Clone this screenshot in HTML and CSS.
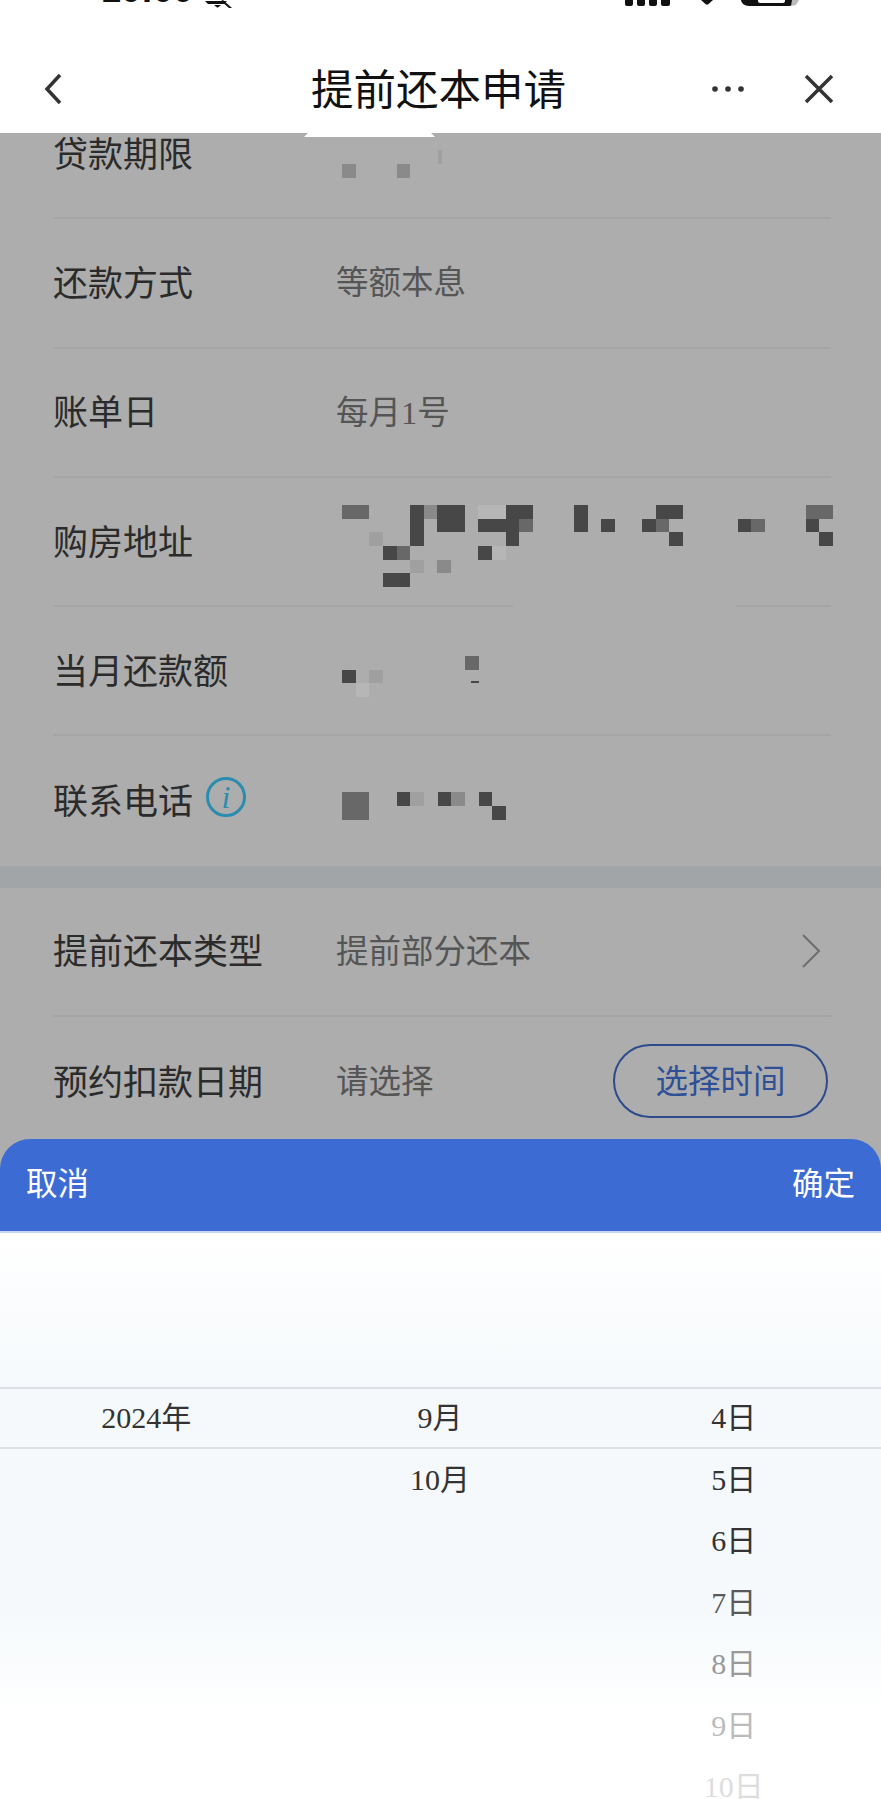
FILE: index.html
```html
<!DOCTYPE html>
<html lang="zh-CN">
<head>
    <meta charset="UTF-8">
    <title>提前还本申请</title>
    <link rel="stylesheet" href="styles.css">
</head>
<body>
<div class="page">

    <div class="status">
        <span class="time">10:00</span>
        <svg class="bell" width="27" height="8" viewBox="0 0 27 8">
            <path d="M0 1h22l-3 3H3zM9 5h7l-3 2.500h-1zM18 0l9 8h-3l-8-7z"/>
        </svg>
        <svg class="bars" width="46" height="8" viewBox="0 0 46 8">
            <path d="M0 0h8v4a2 2 0 0 1-2 2h-4a2 2 0 0 1-2-2zM12 0h8v4a2 2 0 0 1-2 2h-4a2 2 0 0 1-2-2zM24 0h8v4a2 2 0 0 1-2 2h-4a2 2 0 0 1-2-2zM36 0h9v4a2 2 0 0 1-2 2h-5a2 2 0 0 1-2-2z"/>
        </svg>
        <svg class="wifi" width="12" height="8" viewBox="0 0 12 8">
            <path d="M0 0h12l-5 4.500h-2z"/>
        </svg>
        <svg class="battery" width="58" height="8" viewBox="0 0 58 8">
            <path d="M0 0h54l-2 3a4 4 0 0 1-4 3H8a8 6 0 0 1-8-6z"/>
            <path d="M17 0h27v1a2 2 0 0 1-2 2H19a2 2 0 0 1-2-2z" fill="#fff"/>
            <path d="M51 0h7l-3 5-5 1z" fill="#bbb"/>
        </svg>
    </div>

    <header class="nav">
        <svg class="nav-back" width="20" height="32" viewBox="0 0 20 32">
            <path d="M17 2L4 16l13 14"/>
        </svg>
        <h1 class="nav-title">提前还本申请</h1>
        <div class="nav-right">
            <svg class="nav-more" width="32" height="6" viewBox="0 0 32 6">
                <circle cx="3" cy="3" r="2.800"/><circle cx="16" cy="3" r="2.800"/><circle cx="29" cy="3" r="2.800"/>
            </svg>
            <svg class="nav-close" width="30" height="30" viewBox="0 0 30 30">
                <path d="M2 2l26 26M28 2L2 28"/>
            </svg>
        </div>
    </header>

    <main class="scroll">
        <section class="list">
            <div class="row">
                <div class="label">贷款期限</div>
                <svg class="mosaic mosaic-term" width="109" height="28" viewBox="0 0 8 2" preserveAspectRatio="none">
                    <rect class="c-fade" x="7.050" y="0" width=".3" height="1"/>
                    <rect class="c-mid" x="0" y="1" width="1" height="1"/>
                    <rect class="c-mid" x="4" y="1" width="1" height="1"/>
                </svg>
            </div>
            <div class="row">
                <div class="label">还款方式</div>
                <div class="value">等额本息</div>
            </div>
            <div class="row">
                <div class="label">账单日</div>
                <div class="value">每月1号</div>
            </div>
            <div class="row row-gap">
                <div class="label">购房地址</div>
                <svg class="mosaic mosaic-addr" width="491" height="82" viewBox="0 0 36 6" preserveAspectRatio="none">
                    <rect class="c-grey" x="0" y="0" width="2" height="1"/>
                    <rect class="c-dark" x="5" y="0" width="1" height="3"/>
                    <rect class="c-mid" x="6" y="0" width="1" height="1"/>
                    <rect class="c-dark" x="7" y="0" width="2" height="2"/>
                    <rect class="c-pale" x="10" y="0" width="2" height="1"/>
                    <rect class="c-dark" x="12" y="0" width="2" height="1"/>
                    <rect class="c-dark" x="17" y="0" width="1" height="2"/>
                    <rect class="c-dark" x="23" y="0" width="2" height="1"/>
                    <rect class="c-grey" x="34" y="0" width="2" height="1"/>
                    <rect class="c-dark" x="10" y="1" width="3" height="1"/>
                    <rect class="c-grey" x="13" y="1" width="1" height="1"/>
                    <rect class="c-dark" x="19" y="1" width="1" height="1"/>
                    <rect class="c-dark" x="22" y="1" width="1" height="1"/>
                    <rect class="c-grey" x="23" y="1" width="1" height="1"/>
                    <rect class="c-dark" x="29" y="1" width="1" height="1"/>
                    <rect class="c-grey" x="30" y="1" width="1" height="1"/>
                    <rect class="c-dark" x="34" y="1" width="1" height="1"/>
                    <rect class="c-fade" x="2" y="2" width="1" height="1"/>
                    <rect class="c-dark" x="12" y="2" width="1" height="1"/>
                    <rect class="c-dark" x="24" y="2" width="1" height="1"/>
                    <rect class="c-dark" x="35" y="2" width="1" height="1"/>
                    <rect class="c-dark" x="3" y="3" width="1" height="1"/>
                    <rect class="c-grey" x="4" y="3" width="1" height="1"/>
                    <rect class="c-dark" x="10" y="3" width="1" height="1"/>
                    <rect class="c-pale" x="11" y="3" width="1" height="1"/>
                    <rect class="c-fade" x="5" y="4" width="1" height="1"/>
                    <rect class="c-mid" x="7" y="4" width="1" height="1"/>
                    <rect class="c-dark" x="3" y="5" width="2" height="1"/>
                </svg>
            </div>
            <div class="row">
                <div class="label">当月还款额</div>
                <svg class="mosaic mosaic-month" width="137" height="41" viewBox="0 0 10 3" preserveAspectRatio="none">
                    <rect class="c-grey" x="9" y="0" width="1" height="1"/>
                    <rect class="c-dark" x="0" y="1" width="1" height="1"/>
                    <rect class="c-fade" x="2" y="1" width="1" height="1"/>
                    <rect class="c-pale" x="1" y="2" width="1" height="1"/>
                    <rect class="c-dark" x="9.400" y="1.850" width=".6" height=".1"/>
                </svg>
            </div>
            <div class="row row-last">
                <div class="label">联系电话
                    <svg class="info" width="40" height="40" viewBox="0 0 40 40">
                        <circle cx="20" cy="20" r="18.500"/>
                        <text x="20" y="31" text-anchor="middle">i</text>
                    </svg>
                </div>
                <svg class="mosaic mosaic-phone" width="164" height="28" viewBox="0 0 12 2" preserveAspectRatio="none">
                    <rect class="c-grey" x="0" y="0" width="2" height="2"/>
                    <rect class="c-dark" x="4" y="0" width="1" height="1"/>
                    <rect class="c-fade" x="5" y="0" width="1" height="1"/>
                    <rect class="c-dark" x="7" y="0" width="1" height="1"/>
                    <rect class="c-mid" x="8" y="0" width="1" height="1"/>
                    <rect class="c-dark" x="10" y="0" width="1" height="1"/>
                    <rect class="c-dark" x="11" y="1" width="1" height="1"/>
                </svg>
            </div>
        </section>

        <div class="band"></div>

        <section class="list-form">
            <div class="row">
                <div class="label">提前还本类型</div>
                <div class="value">提前部分还本</div>
                <svg class="arrow" width="18" height="34" viewBox="0 0 18 34">
                    <path d="M1 1l16 16L1 33"/>
                </svg>
            </div>
            <div class="row row-last">
                <div class="label">预约扣款日期</div>
                <div class="value">请选择</div>
                <button class="pick-btn">选择时间</button>
            </div>
        </section>
    </main>

    <!-- date picker sheet, lies over the form -->
    <aside class="sheet">
        <div class="sheet-head">
            <span>取消</span>
            <span>确定</span>
        </div>
        <div class="wheel">
            <div class="wheel-line"></div>
            <ul class="wheel-col">
                <li>2024年</li>
            </ul>
            <ul class="wheel-col">
                <li>9月</li>
                <li>10月</li>
            </ul>
            <ul class="wheel-col">
                <li>4日</li>
                <li>5日</li>
                <li>6日</li>
                <li class="fade-1">7日</li>
                <li class="fade-2">8日</li>
                <li class="fade-3">9日</li>
                <li class="fade-4">10日</li>
            </ul>
        </div>
    </aside>

</div>
</body>
</html>
```

FILE: styles.css
```css
*{
    box-sizing: border-box;
}
body{
    margin: 0;
    font-family: "Liberation Serif", "Noto Sans CJK SC", serif;
}
.page{
    position: relative;
    width: 881px;
    height: 1799px;
    overflow: hidden;
    background-color: #adadad;
}

/* status bar, cut off by the top of the picture */
.status{
    display: flex;
    height: 8px;
    overflow: hidden;
    background-color: #fff;
    padding-left: 101px;
}
.time{
    width: 104px;
    margin-top: -28px;
    font-family: "Liberation Sans", sans-serif;
    font-size: 36px;
    font-weight: bold;
    line-height: 36px;
    color: #111;
}
.status svg{
    flex: none;
    fill: #111;
}
.bars{
    margin-left: 393px;
}
.wifi{
    margin-left: 30px;
}
.battery{
    margin-left: 28px;
}

/* nav */
.nav{
    position: relative;
    display: grid;
    grid-template-columns: 1fr auto 1fr;
    align-items: center;
    height: 125px;
    padding: 36px 47px 0 43px;
    background-color: #fff;
}
.nav::after{
    content: "";
    position: absolute;
    left: 304px;
    top: 125px;
    width: 131px;
    height: 4px;
    background-color: #fff;
    clip-path: polygon(3% 0, 97% 0, 100% 100%, 0 100%);
}
.nav svg{
    fill: none;
    stroke: #333;
    stroke-width: 3.5;
}
.nav-title{
    margin: 0;
    padding-top: 4px;
    font-size: 42.5px;
    font-weight: normal;
    line-height: 1.2;
    color: #111;
}
.nav-right{
    display: flex;
    justify-content: flex-end;
    align-items: center;
    gap: 60px;
}
.nav svg.nav-more{
    fill: #333;
    stroke: none;
}

/* rows */
.scroll{
    height: 1006px;
    overflow: hidden;
}
.list{
    margin-top: -43px;
}
.row{
    position: relative;
    display: flex;
    align-items: center;
    height: 129.3px;
    margin: 0 50px 0 53px;
    border-bottom: 2px solid #a5a5a5;
}
.row-last{
    height: 129.3px;
    border-bottom: 0;
}
.row-gap::after{
    content: "";
    position: absolute;
    left: 460px;
    bottom: -2px;
    width: 223px;
    height: 2px;
    background-color: #adadad;
}
.label{
    display: flex;
    align-items: center;
    flex: none;
    width: 283px;
    padding-top: 4px;
    font-size: 35px;
    line-height: 42px;
    color: #2b2b2b;
}
.value{
    flex: 1;
    padding-top: 1px;
    font-size: 32.5px;
    line-height: 40px;
    color: #555;
}
.band{
    height: 22px;
    background-color: #a2a5a8;
}
.arrow{
    flex: none;
    margin-right: 11px;
    fill: none;
    stroke: #6e6e6e;
    stroke-width: 2;
}
.info{
    margin: -12px 0 0 13px;
    fill: none;
    stroke: #2a8db0;
    stroke-width: 3;
}
.info text{
    font-family: "Liberation Serif", serif;
    font-style: italic;
    font-size: 32px;
    fill: #2a8db0;
    stroke: none;
}
.pick-btn{
    flex: none;
    width: 215px;
    height: 74px;
    margin: -2px 3px 0 0;
    padding: 0 0 5px;
    border: 2px solid #2c4a8c;
    border-radius: 37px;
    background: none;
    font-family: inherit;
    font-size: 32.5px;
    color: #2f5096;
}

/* redacted blocks */
.mosaic{
    flex: none;
    align-self: flex-start;
    margin-left: 5.5px;
    shape-rendering: crispEdges;
}
.mosaic-term{
    margin-top: 60px;
}
.mosaic-addr{
    margin-top: 27px;
}
.mosaic-month{
    margin-top: 49px;
}
.mosaic-phone{
    margin-top: 56px;
}
.c-dark{
    fill: #474747;
}
.c-grey{
    fill: #686868;
}
.c-mid{
    fill: #8a8a8a;
}
.c-fade{
    fill: #a0a0a0;
}
.c-pale{
    fill: #b6b6b6;
}

/* picker */
.sheet{
    position: absolute;
    left: 0;
    bottom: 0;
    width: 881px;
    height: 660px;
}
.sheet-head{
    display: flex;
    justify-content: space-between;
    align-items: center;
    height: 94px;
    padding: 0 26px 9px;
    border-radius: 30px 30px 0 0;
    border-bottom: 2px solid #c4d3f0;
    background-color: #3c6cd3;
    font-size: 31.5px;
    color: #fff;
}
.wheel{
    position: relative;
    display: grid;
    grid-template-columns: 1fr 1fr 1fr;
    height: 566px;
    padding-top: 154px;
    overflow: hidden;
    background: linear-gradient(#fff 0, #f5f9fb 28%, #f5f9fb 67%, #fff 85%);
}
.wheel-line{
    position: absolute;
    left: 0;
    right: 0;
    top: 154px;
    height: 62px;
    border-top: 2px solid #dde1e5;
    border-bottom: 2px solid #dde1e5;
}
.wheel-col{
    margin: 0 0 0 -1px;
    padding: 0;
    list-style: none;
    text-align: center;
    font-size: 30px;
    color: #333;
}
.wheel-col li{
    height: 61.5px;
    line-height: 61.5px;
}
.wheel-col .fade-1{
    color: #595959;
}
.wheel-col .fade-2{
    color: #999;
}
.wheel-col .fade-3{
    color: #bbb;
}
.wheel-col .fade-4{
    color: #ddd;
}
```
